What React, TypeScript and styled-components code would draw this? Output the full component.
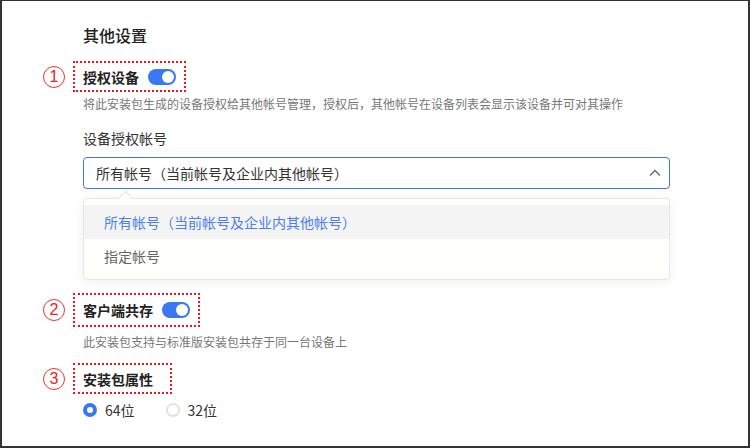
import React from 'react';
import styled, { createGlobalStyle } from 'styled-components';

const GlobalStyle = createGlobalStyle`
  html, body {
    margin: 0;
    padding: 0;
    background: #ffffff;
  }
  body {
    font-family: "Noto Sans CJK SC", "Noto Sans", sans-serif;
    color: #333;
  }
`;

const Frame = styled.div`
  box-sizing: border-box;
  width: 750px;
  height: 448px;
  border: 2px solid #333;
  border-top-width: 1px;
  background: #fff;
  padding: 22px 0 0 81px;
  overflow: hidden;
`;

const Title = styled.h2`
  margin: 0;
  font-size: 16px;
  line-height: 24px;
  font-weight: 500;
  color: #222;
`;

const MarkedRow = styled.div<{ $top: number }>`
  display: flex;
  align-items: center;
  margin-left: -40px;
  margin-top: ${(p) => p.$top}px;
`;

const Badge = styled.span`
  box-sizing: border-box;
  width: 22px;
  height: 22px;
  border: 1px solid #ee3333;
  border-radius: 50%;
  color: #ee2222;
  font-family: "Liberation Sans", sans-serif;
  font-size: 16px;
  line-height: 20px;
  text-align: center;
  margin-right: 8px;
`;

const DottedBox = styled.div<{ $h: number; $right?: number }>`
  box-sizing: border-box;
  height: ${(p) => p.$h}px;
  display: flex;
  align-items: center;
  gap: 9px;
  padding: 0 ${(p) => p.$right ?? 8}px 0 8px;
  border: 2px dotted #e8161e;
`;

const Label = styled.span`
  font-size: 14px;
  font-weight: 700;
  color: #222;
`;

const Toggle = styled.span`
  position: relative;
  display: inline-block;
  width: 28px;
  height: 16px;
  border-radius: 8px;
  background: #3a78f2;
  &::after {
    content: '';
    position: absolute;
    top: 2px;
    right: 2px;
    width: 12px;
    height: 12px;
    border-radius: 50%;
    background: #fff;
  }
`;

const Hint = styled.p<{ $top: number }>`
  margin: ${(p) => p.$top}px 0 0;
  font-size: 12px;
  line-height: 18px;
  color: #777;
`;

const FieldLabel = styled.div`
  margin-top: 15px;
  font-size: 14px;
  line-height: 20px;
  color: #333;
`;

const Select = styled.div`
  box-sizing: border-box;
  margin-top: 9px;
  width: 587px;
  height: 32px;
  border: 1px solid #3a78f2;
  border-radius: 4px;
  display: flex;
  align-items: center;
  justify-content: space-between;
  padding: 0 8px 0 12px;
  font-size: 14px;
  color: #333;
`;

const Menu = styled.div`
  position: relative;
  box-sizing: border-box;
  margin-top: 9px;
  width: 587px;
  padding: 6px 0;
  background: #fffffc;
  border: 1px solid #e6e6e6;
  border-radius: 4px;
  box-shadow: 0 2px 12px rgba(0, 0, 0, 0.06);
  &::before {
    content: '';
    position: absolute;
    top: -6px;
    left: 36px;
    width: 10px;
    height: 10px;
    background: #fffffc;
    border-left: 1px solid #e6e6e6;
    border-top: 1px solid #e6e6e6;
    transform: rotate(45deg);
  }
`;

const Option = styled.div<{ $active?: boolean }>`
  position: relative;
  height: 34px;
  display: flex;
  align-items: center;
  padding-left: 20px;
  font-size: 14px;
  background: ${(p) => (p.$active ? '#f4f4f4' : 'transparent')};
  color: ${(p) => (p.$active ? '#4d7ef0' : '#666')};
`;

const RadioGroup = styled.div`
  display: flex;
  align-items: center;
  margin-top: 6px;
  height: 20px;
`;

const RadioItem = styled.label`
  display: flex;
  align-items: center;
  gap: 8px;
  margin-right: 31px;
  font-size: 14px;
  color: #333;
`;

const RadioDot = styled.span<{ $checked?: boolean }>`
  box-sizing: border-box;
  width: 14px;
  height: 14px;
  border-radius: 50%;
  border: ${(p) => (p.$checked ? '4.5px solid #3a78f2' : '2px solid #e2e2e2')};
  background: #fff;
`;

const Chevron = () => (
  <svg width="12" height="8" viewBox="0 0 12 8">
    <path d="M1 6.5 L6 1.5 L11 6.5" fill="none" stroke="#666" strokeWidth="1.3" />
  </svg>
);

export default function App() {
  return (
    <>
      <GlobalStyle />
      <Frame>
        <Title>其他设置</Title>

        <MarkedRow $top={14}>
          <Badge>1</Badge>
          <DottedBox $h={31}>
            <Label>授权设备</Label>
            <Toggle />
          </DottedBox>
        </MarkedRow>
        <Hint $top={3}>将此安装包生成的设备授权给其他帐号管理，授权后，其他帐号在设备列表会显示该设备并可对其操作</Hint>

        <FieldLabel>设备授权帐号</FieldLabel>
        <Select>
          <span>所有帐号（当前帐号及企业内其他帐号）</span>
          <Chevron />
        </Select>
        <Menu>
          <Option $active>所有帐号（当前帐号及企业内其他帐号）</Option>
          <Option>指定帐号</Option>
        </Menu>

        <MarkedRow $top={13}>
          <Badge>2</Badge>
          <DottedBox $h={34}>
            <Label>客户端共存</Label>
            <Toggle />
          </DottedBox>
        </MarkedRow>
        <Hint $top={6}>此安装包支持与标准版安装包共存于同一台设备上</Hint>

        <MarkedRow $top={12}>
          <Badge>3</Badge>
          <DottedBox $h={31} $right={17}>
            <Label>安装包属性</Label>
          </DottedBox>
        </MarkedRow>
        <RadioGroup>
          <RadioItem>
            <RadioDot $checked />
            64位
          </RadioItem>
          <RadioItem>
            <RadioDot />
            32位
          </RadioItem>
        </RadioGroup>
      </Frame>
    </>
  );
}
